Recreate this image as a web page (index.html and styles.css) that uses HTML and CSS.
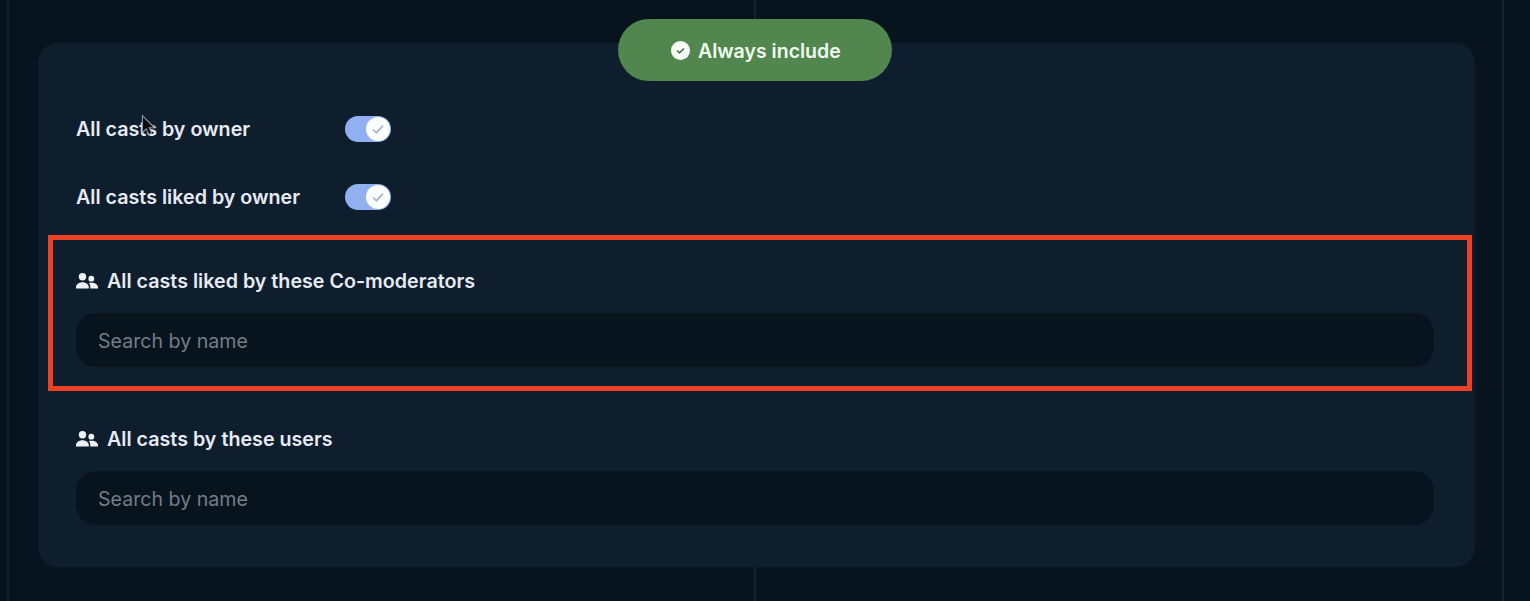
FILE: index.html
```html
<!DOCTYPE html>
<html lang="en">
<head>
<meta charset="utf-8">
<title>Moderation rules</title>
<link rel="stylesheet" href="styles.css">
</head>
<body>
<svg class="sprite" aria-hidden="true">
  <symbol id="users" viewBox="0 0 22 16">
    <circle cx="6.500" cy="3.700" r="3.700"/>
    <path d="M0 15.500v-1.300C0 11.500 3 9.300 6.500 9.300s6.300 2.200 6.300 4.900v1.300z"/>
    <circle cx="15.300" cy="5.700" r="2.900"/>
    <path d="M14.300 15.500v-1.500c0-1.700-.5-2.900-1.500-3.900 4.200-1.300 9.200.5 9.200 4.200v1.200z"/>
  </symbol>
</svg>
<main class="page">
  <section class="card">
    <div class="badge">
      <svg class="badge-icon" viewBox="0 0 20 20"><circle cx="10" cy="10" r="10" fill="#fafff8"/><path d="M6.500 10l2.500 2.500 4.700-4.600" fill="none" stroke="#4f714e" stroke-width="1.800"/></svg>
      <span class="badge-text">Always include</span>
    </div>
    <div class="row">
      <span class="label">All casts by owner</span>
      <span class="toggle"><span class="knob"><svg viewBox="0 0 24 24"><path d="M7 12.500l3.400 3.200L17 8.700"/></svg></span></span>
    </div>
    <div class="row second">
      <span class="label">All casts liked by owner</span>
      <span class="toggle"><span class="knob"><svg viewBox="0 0 24 24"><path d="M7 12.500l3.400 3.200L17 8.700"/></svg></span></span>
    </div>
    <div class="group">
      <div class="heading"><svg class="users"><use href="#users"/></svg><span class="label">All casts liked by these Co-moderators</span></div>
      <div class="search"><span class="placeholder">Search by name</span></div>
    </div>
    <div class="group last">
      <div class="heading"><svg class="users"><use href="#users"/></svg><span class="label">All casts by these users</span></div>
      <div class="search"><span class="placeholder">Search by name</span></div>
    </div>
  </section>
  <div class="highlight"></div>
  <svg class="cursor" viewBox="0 0 16 24"><path d="M1.500 1.500v18l4.200-3.900 2.700 6 3-1.300-2.600-5.900h5.700z"/></svg>
</main>
</body>
</html>
```
FILE: styles.css
```css
* { box-sizing: border-box; }
body { margin: 0; background: #07141e; font-family: Inter, "Liberation Sans", sans-serif; }
.sprite { position: absolute; width: 0; height: 0; }
.page {
  position: relative;
  height: 601px;
  padding: 43px 55px 0 38px;
  overflow: hidden;
  background:
    linear-gradient(#15222c, #15222c) 7px 0 / 2px 100% no-repeat,
    linear-gradient(#15222c, #15222c) 754px 0 / 2px 100% no-repeat,
    linear-gradient(#15222c, #15222c) 1502px 0 / 2px 100% no-repeat,
    #07141e;
}
.card {
  display: flex;
  flex-direction: column;
  height: 524px;
  padding: 0 41px 0 38px;
  border-radius: 20px;
  background: #0f1e2d;
}
.badge {
  display: flex;
  align-items: center;
  align-self: center;
  gap: 8px;
  width: 274px;
  height: 62px;
  margin-top: -24px;
  padding: 1px 0 0 53px;
  border-radius: 31px;
  background: #51874e;
}
.badge-icon { width: 19px; height: 19px; flex: none; }
.badge-text { padding-top: 1px; color: #f0fbef; font-size: 19.5px; font-weight: 600; line-height: 24px; white-space: nowrap; }
.row { display: flex; align-items: center; height: 26px; margin-top: 35px; }
.row.second { margin-top: 42px; }
.row .label { width: 269px; }
.label { color: #e6ebf3; font-size: 19.7px; font-weight: 600; line-height: 24px; white-space: nowrap; }
.toggle { display: flex; justify-content: flex-end; width: 46px; height: 26px; padding: 1px; border-radius: 13px; background: #91b0f2; }
.knob { width: 24px; height: 24px; border-radius: 50%; background: #fdfeff; }
.knob svg { display: block; }
.knob path { fill: none; stroke: #aeb5bf; stroke-width: 1.7; }
.group { margin-top: 59px; }
.group.last { margin-top: 60px; }
.heading { display: flex; align-items: center; gap: 9px; height: 24px; }
.users { width: 22px; height: 16px; fill: #eef2f7; }
.search { display: flex; align-items: center; height: 54px; margin-top: 20px; padding: 2px 0 0 22px; border-radius: 20px; background: #07141e; }
.placeholder { color: #727d88; font-size: 19.6px; line-height: 24px; }
.highlight { position: absolute; left: 48px; top: 235px; width: 1424px; height: 156px; border: 5px solid #ed4024; }
.cursor { position: absolute; left: 141px; top: 114px; width: 15px; height: 23px; fill: #080b10; stroke: #8d959e; stroke-width: 1.200; }
```
